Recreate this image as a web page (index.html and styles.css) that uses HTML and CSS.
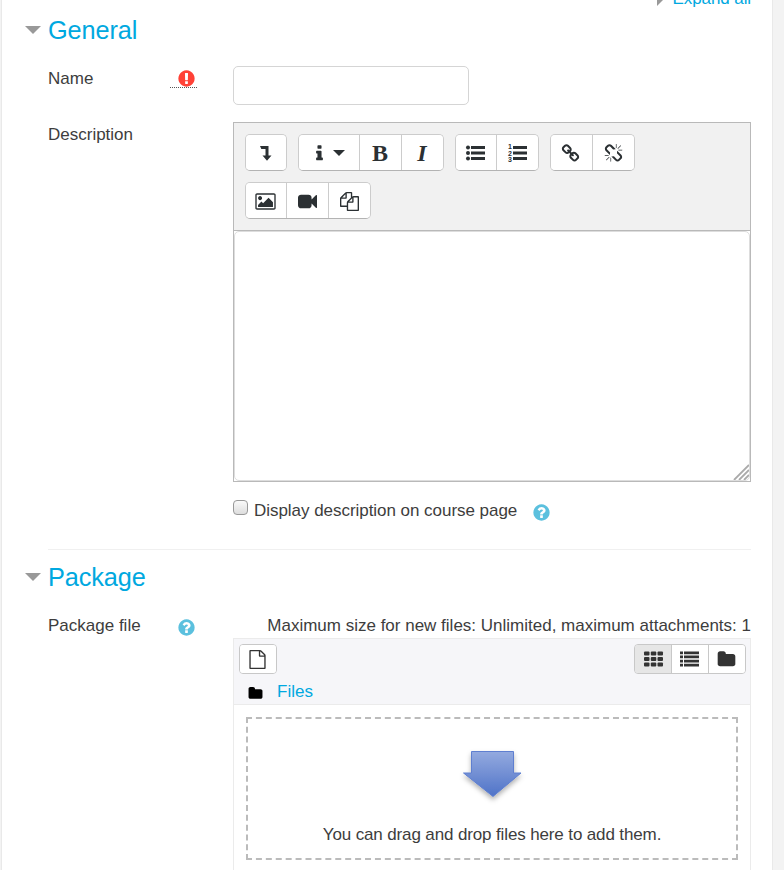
FILE: index.html
```
<!DOCTYPE html>
<html lang="en">
<head>
<meta charset="utf-8">
<title>Package settings</title>
<link rel="stylesheet" href="styles.css">
</head>
<body>
<svg class="defs" width="0" height="0">
  <symbol id="help" viewBox="0 0 1792 1792"><path d="M1024 1376v-192q0-14-9-23t-23-9h-192q-14 0-23 9t-9 23v192q0 14 9 23t23 9h192q14 0 23-9t9-23zm256-672q0-88-55.500-163t-138.500-116-170-41q-243 0-371 213-15 24 8 42l132 100q7 6 19 6 16 0 25-12 53-68 86-92 34-24 86-24 48 0 85.500 26t37.500 59q0 38-20 61t-68 45q-63 28-115.500 86.500t-52.500 125.500v36q0 14 9 23t23 9h192q14 0 23-9t9-23q0-19 21.500-49.500t54.500-49.500q32-18 49-28.500t46-35 44.500-48 28-60.500 12.500-81zm384 192q0 209-103 385.500t-279.500 279.500-385.500 103-385.500-103-279.500-279.500-103-385.500 103-385.500 279.500-279.500 385.500-103 385.500 103 279.500 279.500 103 385.500z"/></symbol>
  <symbol id="folder" viewBox="0 0 1792 1792"><path d="M1728 608v704q0 92-66 158t-158 66h-1216q-92 0-158-66t-66-158v-960q0-92 66-158t158-66h320q92 0 158 66t66 158v32h672q92 0 158 66t66 158z"/></symbol>
</svg>
<main class="panel">
  <div class="expand"><i class="caret-right"></i><a>Expand all</a></div>

  <section>
    <h2 class="legend"><i class="caret-down"></i>General</h2>
    <div class="row name-row">
      <div class="label"><span>Name</span>
        <span class="required"><svg class="icon" viewBox="0 0 1792 1792"><path d="M896 128q209 0 385.500 103t279.500 279.500 103 385.500-103 385.500-279.500 279.500-385.500 103-385.500-103-279.500-279.500-103-385.500 103-385.500 279.500-279.500 385.500-103zm128 1247v-190q0-14-9-23.500t-22-9.500h-192q-13 0-23 10t-10 23v190q0 13 10 23t23 10h192q13 0 22-9.500t9-23.500zm-2-344l18-621q0-12-10-18-10-8-24-8h-220q-14 0-24 8-10 6-10 18l17 621q0 10 10 17.500t24 7.500h185q14 0 23.500-7.500t10.500-17.500z"/></svg></span>
      </div>
      <input class="name" type="text">
    </div>
    <div class="row">
      <div class="label"><span>Description</span></div>
      <div class="editor">
        <div class="toolbar">
          <div class="group"><button><svg class="icon" viewBox="0 0 19 19"><path d="M4 2h8.500v9.500h3L11 16.800 6.500 11.500h3V5H5.300z"/></svg></button></div>
          <div class="group">
            <button class="style"><svg class="icon" viewBox="0 0 1792 1792"><path d="M1216 1344v128q0 26-19 45t-45 19h-512q-26 0-45-19t-19-45v-128q0-26 19-45t45-19h64v-384h-64q-26 0-45-19t-19-45v-128q0-26 19-45t45-19h384q26 0 45 19t19 45v576h64q26 0 45 19t19 45zm-128-1152v192q0 26-19 45t-45 19h-256q-26 0-45-19t-19-45v-192q0-26 19-45t45-19h256q26 0 45 19t19 45z"/></svg><i class="caret-menu"></i></button>
            <button class="letter">B</button>
            <button class="letter italic">I</button>
          </div>
          <div class="group">
            <button><svg class="icon" viewBox="0 0 19 19"><circle cx="2" cy="3.500" r="2"/><circle cx="2" cy="9" r="2"/><circle cx="2" cy="14.500" r="2"/><path d="M5 2h14v3H5zM5 7.500h14v3H5zM5 13h14v3H5z"/></svg></button>
            <button><svg class="icon" viewBox="0 0 19 19"><path d="M5 2h14v3H5zM5 7.500h14v3H5zM5 13h14v3H5z"/><text x="0" y="4.800">1</text><text x="0" y="11.500">2</text><text x="0" y="18.200">3</text></svg></button>
          </div>
          <div class="group">
            <button class="linked"><svg class="icon" viewBox="0 0 1792 1792"><path d="M1520 1216q0-40-28-68l-208-208q-28-28-68-28-42 0-72 32 3 3 19 18.500t21.500 21.500 15 19 13 25.500 3.500 27.500q0 40-28 68t-68 28q-15 0-27.500-3.500t-25.500-13-19-15-21.500-21.500-18.500-19q-33 31-33 73 0 40 28 68l206 207q27 27 68 27 40 0 68-26l147-146q28-28 28-67zm-703-705q0-40-28-68l-206-207q-28-28-68-28-39 0-68 27l-147 146q-28 28-28 67 0 40 28 68l208 208q27 27 68 27 42 0 72-31-3-3-19-18.500t-21.500-21.500-15-19-13-25.500-3.500-27.500q0-40 28-68t68-28q15 0 27.500 3.500t25.500 13 19 15 21.500 21.500 18.500 19q33-31 33-73zm895 705q0 120-85 203l-147 146q-83 83-203 83-121 0-204-85l-206-207q-83-83-83-203 0-123 88-209l-88-88q-86 88-208 88-120 0-204-84l-208-208q-84-84-84-204t85-203l147-146q83-83 203-83 121 0 204 85l206 207q83 83 83 203 0 123-88 209l88 88q86-88 208-88 120 0 204 84l208 208q84 84 84 204z"/></svg></button>
            <button><svg class="icon" viewBox="0 0 1792 1792"><path d="M503 1271l-256 256q-10 9-23 9-12 0-23-9-9-10-9-23t9-23l256-256q10-9 23-9t23 9q9 10 9 23t-9 23zm169 41v320q0 14-9 23t-23 9-23-9-9-23v-320q0-14 9-23t23-9 23 9 9 23zm-224-224q0 14-9 23t-23 9h-320q-14 0-23-9t-9-23 9-23 23-9h320q14 0 23 9t9 23zm1264 128q0 120-85 203l-147 146q-83 83-203 83-121 0-204-85l-334-335q-21-21-42-56l239-18 273 274q28 28 68 28.500t68-27.500l147-146q28-28 28-67 0-40-28-68l-274-275 18-239q35 21 56 42l336 336q84 86 84 204zm-617-724l-239 18-273-274q-28-28-68-28-39 0-68 27l-147 146q-28 28-28 67 0 40 28 68l274 274-18 240q-35-21-56-42l-336-336q-84-86-84-204 0-120 85-203l147-146q83-83 203-83 121 0 204 85l334 335q21 21 42 56zm633 84q0 14-9 23t-23 9h-320q-14 0-23-9t-9-23 9-23 23-9h320q14 0 23 9t9 23zm-544-544v320q0 14-9 23t-23 9-23-9-9-23v-320q0-14 9-23t23-9 23 9 9 23zm407 151l-256 256q-11 9-23 9t-23-9q-9-10-9-23t9-23l256-256q10-9 23-9t23 9q9 10 9 23t-9 23z"/></svg></button>
          </div>
          <div class="group">
            <button><svg class="icon" viewBox="0 0 1792 1792"><path d="M576 576q0 80-56 136t-136 56-136-56-56-136 56-136 136-56 136 56 56 136zm1024 384v448h-1408v-192l320-320 160 160 512-512zm96-704h-1600q-13 0-22.500 9.500t-9.500 22.500v1216q0 13 9.500 22.500t22.500 9.500h1600q13 0 22.500-9.500t9.500-22.500v-1216q0-13-9.500-22.500t-22.500-9.500zm160 32v1216q0 66-47 113t-113 47h-1600q-66 0-113-47t-47-113v-1216q0-66 47-113t113-47h1600q66 0 113 47t47 113z"/></svg></button>
            <button><svg class="icon" viewBox="0 0 1792 1792"><path d="M1792 352v1088q0 42-39 59-13 5-25 5-27 0-45-19l-403-403v166q0 119-84.500 203.500t-203.500 84.500h-704q-119 0-203.500-84.500t-84.500-203.500v-704q0-119 84.500-203.500t203.500-84.500h704q119 0 203.500 84.500t84.500 203.500v165l403-402q18-19 45-19 12 0 25 5 39 17 39 59z"/></svg></button>
            <button><svg class="icon" viewBox="0 0 1792 1792"><path d="M1696 384q40 0 68 28t28 68v1216q0 40-28 68t-68 28h-960q-40 0-68-28t-28-68v-288h-544q-40 0-68-28t-28-68v-672q0-40 20-88t48-76l408-408q28-28 76-48t88-20h416q40 0 68 28t28 68v328q68-40 128-40h416zm-544 213l-299 299h299v-299zm-640-384l-299 299h299v-299zm196 647l316-316v-416h-384v416q0 40-28 68t-68 28h-416v640h512v-256q0-40 20-88t48-76zm956 804v-1152h-384v416q0 40-28 68t-68 28h-416v640h896z"/></svg></button>
          </div>
        </div>
        <div class="content">
          <svg class="grip" width="16" height="16" viewBox="0 0 16 16"><path d="M1 16L16 1M6 16L16 6M11 16L16 11"/></svg>
        </div>
      </div>
    </div>
    <div class="display"><span class="check"></span><span class="text">Display description on course page</span><svg class="icon info"><use href="#help"/></svg></div>
  </section>

  <section class="package">
    <h2 class="legend"><i class="caret-down"></i>Package</h2>
    <div class="row">
      <div class="label"><span>Package file</span><svg class="icon info"><use href="#help"/></svg></div>
      <div>
        <div class="limits">Maximum size for new files: Unlimited, maximum attachments: 1</div>
        <div class="manager">
          <div class="bar">
            <div class="tools">
              <div class="views"><button class="single"><svg class="icon" viewBox="0 0 1792 1792"><path d="M1596 380q28 28 48 76t20 88v1152q0 40-28 68t-68 28h-1344q-40 0-68-28t-28-68v-1600q0-40 28-68t68-28h896q40 0 88 20t76 48zm-444-244v376h376q-10-29-22-41l-313-313q-12-12-41-22zm384 1528v-1024h-416q-40 0-68-28t-28-68v-416h-768v1536h1280z"/></svg></button></div>
              <div class="views">
                <button class="active"><svg class="icon" viewBox="0 0 19 19"><g><rect x="0" y="1.500" width="5.500" height="4" rx="1"/><rect x="6.800" y="1.500" width="5.500" height="4" rx="1"/><rect x="13.500" y="1.500" width="5.500" height="4" rx="1"/><rect x="0" y="7" width="5.500" height="4" rx="1"/><rect x="6.800" y="7" width="5.500" height="4" rx="1"/><rect x="13.500" y="7" width="5.500" height="4" rx="1"/><rect x="0" y="12.500" width="5.500" height="4" rx="1"/><rect x="6.800" y="12.500" width="5.500" height="4" rx="1"/><rect x="13.500" y="12.500" width="5.500" height="4" rx="1"/></g></svg></button>
                <button><svg class="icon" viewBox="0 0 19 19"><path d="M0 1.500h3v2.700H0zM4 1.500h15v2.700H4zM0 5.600h3v2.700H0zM4 5.600h15v2.700H4zM0 9.700h3v2.700H0zM4 9.700h15v2.700H4zM0 13.800h3v2.700H0zM4 13.800h15v2.700H4z"/></svg></button>
                <button class="last"><svg class="icon"><use href="#folder"/></svg></button>
              </div>
            </div>
            <div class="path"><svg class="icon"><use href="#folder"/></svg><a>Files</a></div>
          </div>
          <div class="drop">
            <svg class="arrow" width="80" height="70" viewBox="0 0 80 70">
              <defs>
                <linearGradient id="blue" x1="0" y1="0" x2="0" y2="1"><stop offset="0" stop-color="#94aadf"/><stop offset="1" stop-color="#4f73c8"/></linearGradient>
                <filter id="soft" x="-20%" y="-20%" width="140%" height="150%"><feDropShadow dx="0" dy="3" stdDeviation="2.500" flood-color="#000" flood-opacity=".3"/></filter>
              </defs>
              <path d="M19.500 10.500h42V32H69L41 55.500 11.500 32H19.500z" fill="url(#blue)" stroke="#5f7fd0" filter="url(#soft)"/>
            </svg>
            <span>You can drag and drop files here to add them.</span>
          </div>
        </div>
      </div>
    </div>
  </section>
</main>
</body>
</html>
```

FILE: styles.css
```
* { box-sizing: border-box; }
html { overflow: hidden; }
body {
  margin: 0;
  height: 870px;
  overflow: hidden;
  background: #f3f3f3;
  color: #3d3d3d;
  font: 17px/20px "Liberation Sans", Arial, sans-serif;
}
.defs { position: absolute; }
.panel {
  width: 772px;
  height: 870px;
  overflow: hidden;
  margin-left: 1px;
  padding: 0 21px 0 46px;
  background: #fff;
  border: solid #e9e9e9;
  border-width: 0 1px;
}
a { color: #00a8e0; }
button {
  display: flex;
  align-items: center;
  justify-content: center;
  margin: 0;
  padding: 0;
  border: 0;
  background: #fff;
  color: #2b3033;
}
.icon { width: 19px; height: 19px; fill: currentColor; overflow: visible; flex: none; }
.icon text { font: bold 7px "Liberation Sans", sans-serif; }

.expand {
  display: flex;
  justify-content: flex-end;
  align-items: center;
  gap: 9px;
  height: 20px;
  margin-top: -11px;
  letter-spacing: -.1px;
}
.caret-right { border: solid transparent; border-width: 7px 0 7px 7px; border-left-color: #999; }
.caret-down {
  margin: 0 7px 0 -23px;
  border: solid transparent;
  border-width: 8px 8px 0;
  border-top-color: #999;
}
.legend {
  display: flex;
  align-items: center;
  height: 40px;
  margin: 0 0 17px;
  padding-top: 2px;
  color: #00a8e0;
  font-size: 25.300px;
  font-weight: normal;
  line-height: 40px;
  letter-spacing: -.1px;
}
.row { display: grid; grid-template-columns: 185px minmax(0, 1fr); }
.label {
  display: flex;
  justify-content: space-between;
  align-items: flex-start;
  padding: 3px 36px 0 0;
}
.name-row { height: 56px; }
.required {
  display: flex;
  justify-content: flex-end;
  width: 27px;
  height: 19px;
  border-bottom: 1px dotted #555;
  color: #ff4136;
}
.required .icon { margin-right: 1px; }
.name {
  width: 236px;
  height: 39px;
  border: 1px solid #d5d5d5;
  border-radius: 5px;
  background: #fff;
}
.editor { height: 360px; border: 1px solid #b9b9b9; }
.toolbar {
  display: flex;
  flex-wrap: wrap;
  align-content: flex-start;
  gap: 11px;
  height: 108px;
  padding: 11px;
  background: #f1f1f1;
  border-bottom: 1px solid #b9b9b9;
}
.group {
  display: flex;
  height: 37px;
  border: 1px solid #ccc;
  border-bottom-color: #b3b3b3;
  border-radius: 5px;
  overflow: hidden;
}
.group button { width: 40px; padding: 1px 1px 0 0; }
.group button + button { width: 42px; border-left: 1px solid #ccc; }
.group button.linked { width: 41px; padding-right: 2px; }
.group button.style { width: 60px; padding-right: 4px; gap: 4px; }
.caret-menu { border: solid transparent; border-width: 6px 6px 0; border-top-color: currentColor; }
.group .letter { font: bold 24px/34px "Liberation Serif", serif; }
.group .italic { font-style: italic; }
.content {
  display: flex;
  align-items: flex-end;
  justify-content: flex-end;
  height: 250px;
  border: 1px solid #ddd;
  border-radius: 5px;
}
.grip { fill: none; stroke: #aaa; stroke-width: 1.800; }
.display { display: flex; align-items: center; height: 20px; margin: 18px 0 0 185px; }
.check {
  width: 15px;
  height: 15px;
  margin: -5px 6px 0 0;
  border: 1px solid #999;
  border-radius: 4px;
  background: linear-gradient(#fafafa, #ddd);
}
.display .text { margin-top: 2px; letter-spacing: -.04px; }
.info { color: #5bc0de; }
.display .info { margin: 4px 0 0 15px; }
.label .info { margin: 2px 1px 0 0; }

.package { margin-top: 29px; border-top: 1px solid #f0f0f0; padding-top: 6px; }
.limits { padding-top: 3px; height: 25px; text-align: right; white-space: nowrap; }
.manager { height: 300px; border: 1px solid #ebebeb; }
.bar { height: 66px; padding: 5px 4px 0 5px; background: #f6f6f9; border-bottom: 1px solid #ebebeb; }
.tools { display: flex; justify-content: space-between; }
.views { display: flex; height: 30px; border: 1px solid #c8c8c8; border-radius: 4px; overflow: hidden; }
.views button { width: 37px; padding-right: 1px; border-right: 1px solid #c8c8c8; color: #333; }
.views .active { padding: 0; background: #e6e6e6; }
.views .single, .views .last { width: 36px; border-right: 0; }
.path { display: flex; align-items: center; height: 34px; padding: 2px 0 0 9px; gap: 14px; }
.path .icon { width: 15px; height: 15px; margin-top: 2px; color: #000; }
.drop {
  display: flex;
  flex-direction: column;
  align-items: center;
  height: 143px;
  margin: 12px;
  padding-top: 22px;
  border: 2px dashed #bbb;
}
.drop span { margin-top: 14px; letter-spacing: -.13px; }
```
